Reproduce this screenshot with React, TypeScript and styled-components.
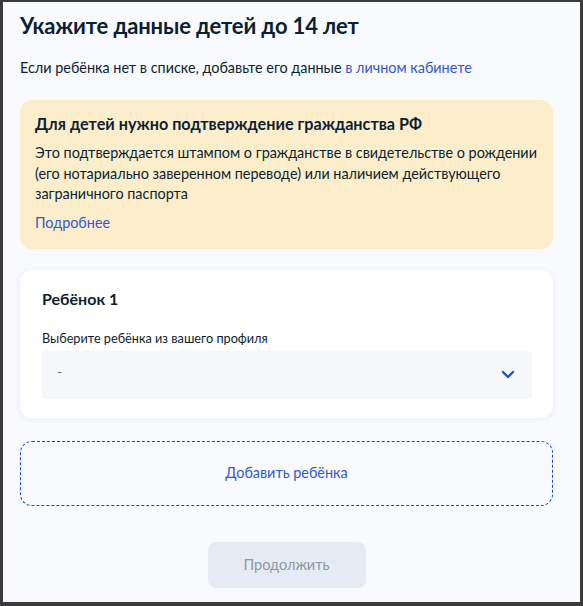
import { createGlobalStyle, styled } from "styled-components";

const GlobalStyle = createGlobalStyle`
  html, body {
    margin: 0;
    padding: 0;
    background: #3b3b3b;
  }
  body {
    font-family: Lato, "Noto Sans", "Liberation Sans", sans-serif;
    color: #0b1f33;
  }
  * {
    box-sizing: border-box;
  }
`;

export default function App() {
  return (
    <>
      <GlobalStyle />
      <Frame>
        <Title>Укажите данные детей до 14 лет</Title>
        <Subtitle>
          Если ребёнка нет в списке, добавьте его данные{" "}
          <Link>в личном кабинете</Link>
        </Subtitle>

        <Notice>
          <NoticeTitle>Для детей нужно подтверждение гражданства РФ</NoticeTitle>
          <NoticeText>
            Это подтверждается штампом о гражданстве в свидетельстве о рождении
            (его нотариально заверенном переводе) или наличием действующего
            заграничного паспорта
          </NoticeText>
          <NoticeLink>Подробнее</NoticeLink>
        </Notice>

        <ChildCard>
          <ChildTitle>Ребёнок 1</ChildTitle>
          <FieldLabel>Выберите ребёнка из вашего профиля</FieldLabel>
          <Select>
            <SelectValue>-</SelectValue>
            <svg width="14" height="9" viewBox="0 0 14 9" fill="none">
              <path
                d="M2 2l5 5 5-5"
                stroke="#0d4cd3"
                strokeWidth="2.2"
                strokeLinecap="round"
                strokeLinejoin="round"
              />
            </svg>
          </Select>
        </ChildCard>

        <AddChild>Добавить ребёнка</AddChild>

        <Footer>
          <ContinueButton disabled>Продолжить</ContinueButton>
        </Footer>
      </Frame>
    </>
  );
}

const Frame = styled.div`
  height: 606px;
  border-style: solid;
  border-color: #3b3b3b;
  border-width: 2px 3px 4px 3px;
  background: #f9fafe;
  padding: 10px 27px 0 17px;
  display: flex;
  flex-direction: column;
`;

const Title = styled.h1`
  margin: 0;
  font-size: 22px;
  line-height: 28px;
  font-weight: 700;
  letter-spacing: -0.15px;
`;

const Subtitle = styled.div`
  margin-top: 18px;
  font-size: 14.4px;
  line-height: 20px;
`;

const Link = styled.span`
  color: #3357d6;
  cursor: pointer;
`;

const Notice = styled.div`
  margin-top: 22px;
  background: #fdeecb;
  border-radius: 12px;
  padding: 13px 16px 16px 15px;
`;

const NoticeTitle = styled.div`
  font-size: 16.2px;
  line-height: 22px;
  font-weight: 700;
`;

const NoticeText = styled.div`
  margin-top: 8px;
  font-size: 14.4px;
  line-height: 20.5px;
`;

const NoticeLink = styled.div`
  margin-top: 8px;
  font-size: 14.4px;
  line-height: 20px;
  color: #3357d6;
  cursor: pointer;
`;

const ChildCard = styled.div`
  margin-top: 21px;
  background: #ffffff;
  border-radius: 12px;
  box-shadow: 0 1px 6px rgba(40, 80, 160, 0.09);
  padding: 18px 21px 19px 22px;
`;

const ChildTitle = styled.div`
  font-size: 16px;
  line-height: 22px;
  font-weight: 700;
`;

const FieldLabel = styled.div`
  margin-top: 19px;
  font-size: 12.7px;
  line-height: 18px;
`;

const Select = styled.div`
  margin-top: 4px;
  height: 48px;
  background: #f5f7fa;
  border-radius: 4px;
  display: flex;
  align-items: center;
  justify-content: space-between;
  padding: 0 17px 0 15px;
`;

const SelectValue = styled.span`
  font-size: 14px;
  color: #66727f;
  margin-top: -6px;
`;

const AddChild = styled.div`
  margin-top: 23px;
  height: 65px;
  border: 1px dashed #0d4cd3;
  border-radius: 12px;
  display: flex;
  align-items: center;
  justify-content: center;
  font-size: 14.4px;
  color: #3357d6;
  cursor: pointer;
  padding-bottom: 2px;
`;

const Footer = styled.div`
  margin-top: 36px;
  display: flex;
  justify-content: center;
`;

const ContinueButton = styled.button`
  width: 158px;
  height: 46px;
  border: none;
  border-radius: 8px;
  background: #e6ebf3;
  color: #8b97a8;
  font-family: inherit;
  font-size: 14.5px;
`;
